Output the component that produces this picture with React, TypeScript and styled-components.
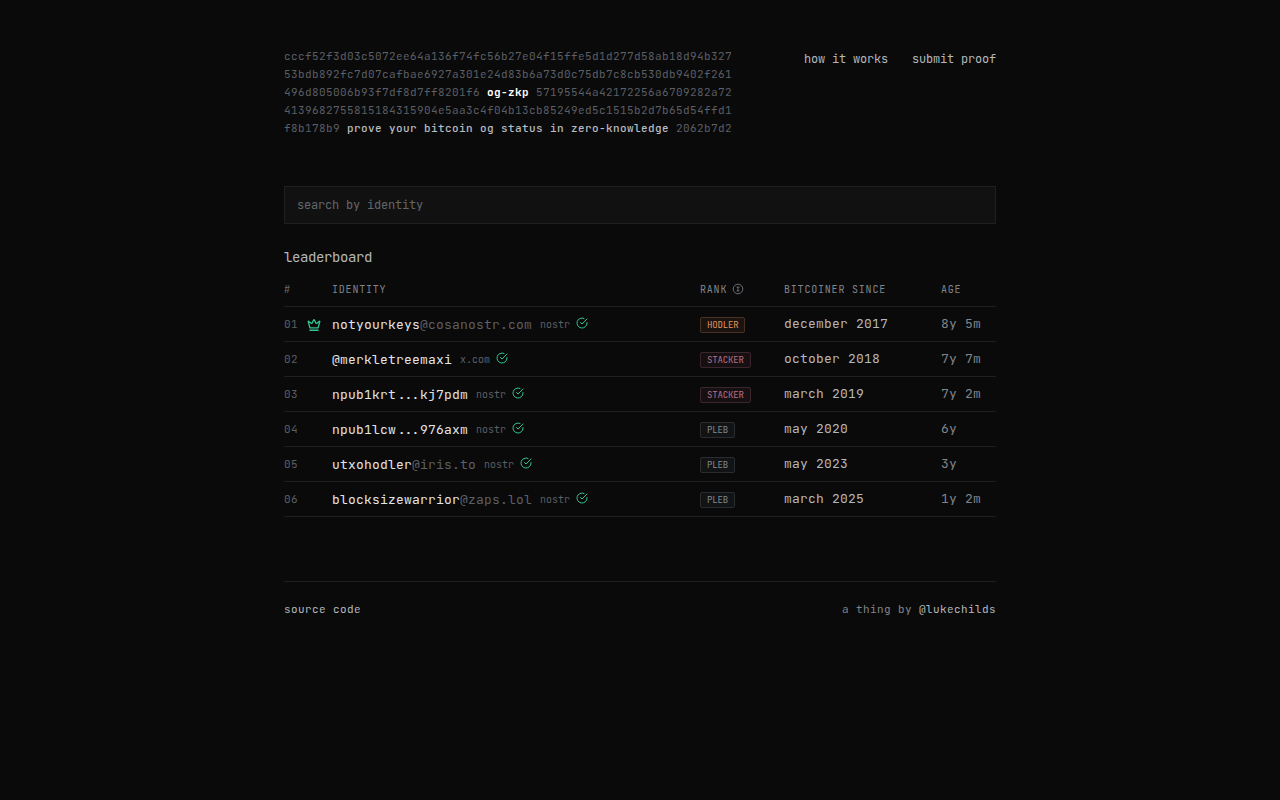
import React from "react";
import styled, { createGlobalStyle } from "styled-components";

const GlobalStyle = createGlobalStyle`
  * { box-sizing: border-box; }
  body {
    margin: 0;
    min-height: 100vh;
    background: #0a0a0a;
    color: #b4b8be;
    font-family: "JetBrains Mono", "DejaVu Sans Mono", "Liberation Mono", monospace;
    font-size: 13px;
    line-height: 18px;
    letter-spacing: 0.2px;
  }
  a { color: inherit; text-decoration: none; }
`;

const Page = styled.main`
  width: 760px;
  margin: 0 auto;
  padding: 47px 24px 0;
`;

const Header = styled.header`
  display: flex;
  justify-content: space-between;
  align-items: flex-start;
  height: 139px;
`;

const HashBlock = styled.div`
  font-size: 11px;
  line-height: 18px;
  letter-spacing: 0.4px;
  color: #5b5f66;
  white-space: pre;
`;

const Brand = styled.strong`
  color: #ffffff;
  font-weight: 700;
`;

const Tagline = styled.span`
  color: #b8bcc2;
  font-weight: 500;
`;

const Nav = styled.nav`
  display: flex;
  gap: 24px;
  padding-top: 3px;
  font-size: 12px;
  line-height: 18px;
  letter-spacing: -0.2px;
`;

const Search = styled.input`
  display: block;
  width: 100%;
  height: 38px;
  padding: 0 12px;
  border: 1px solid #1f1f1f;
  border-radius: 0;
  outline: none;
  background: #111111;
  color: #b4b8be;
  font-family: inherit;
  font-size: 12px;
  letter-spacing: -0.2px;
  &::placeholder { color: #62666c; opacity: 1; }
`;

const Title = styled.h2`
  margin: 23px 0 0;
  font-size: 14px;
  font-weight: 400;
  line-height: 20px;
  letter-spacing: -0.4px;
  color: #b4b8be;
`;

const Row = styled.div<{ $head?: boolean }>`
  display: grid;
  grid-template-columns: 48px 368px 84px 157px 1fr;
  align-items: center;
  height: ${(p) => (p.$head ? 40 : 35)}px;
  border-bottom: 1px solid #1f1f1f;
  white-space: nowrap;
`;

const HeadCell = styled.div<{ $dim?: boolean }>`
  display: flex;
  align-items: center;
  gap: 5px;
  padding-top: 6px;
  font-size: 10px;
  letter-spacing: 0.8px;
  color: ${(p) => (p.$dim ? "#65696f" : "#80848a")};
`;

const Place = styled.div`
  display: flex;
  align-items: center;
  gap: 9px;
  font-size: 11px;
  letter-spacing: 0.4px;
  color: #5b5f66;
`;

const Identity = styled.div`
  display: flex;
  align-items: center;
  padding-top: 1px;
`;

const Name = styled.span`
  color: #e2e5e9;
`;

const Domain = styled.span`
  color: #5b5f66;
`;

const Dots = styled.span`
  display: inline-block;
  width: 24px;
  text-align: center;
  letter-spacing: -1px;
`;

const Platform = styled.span`
  margin: 0 6px 0 8px;
  font-size: 10px;
  letter-spacing: 0;
  color: #5b5f66;
`;

const CheckIcon = styled.svg`
  display: block;
  margin-top: -4px;
`;

const CrownIcon = styled.svg`
  display: block;
  margin-top: 1px;
`;

const InfoIcon = styled.svg`
  display: block;
  margin-top: -1px;
`;

const tones = {
  HODLER: { text: "#e8935c", line: "#463124", fill: "#1a1310" },
  STACKER: { text: "#b8718a", line: "#3b262d", fill: "#171012" },
  PLEB: { text: "#868a90", line: "#2a2d30", fill: "#111315" },
};
type Rank = keyof typeof tones;

const Badge = styled.span<{ $rank: Rank }>`
  display: inline-block;
  height: 16px;
  padding: 0 6px;
  margin-top: 2px;
  border: 1px solid ${(p) => tones[p.$rank].line};
  border-radius: 2px;
  background: ${(p) => tones[p.$rank].fill};
  color: ${(p) => tones[p.$rank].text};
  font-size: 9px;
  line-height: 14px;
  letter-spacing: -0.16px;
  vertical-align: top;
`;

const Since = styled.div`
  color: #b4b8be;
`;

const Age = styled.div`
  color: #80848a;
`;

const Footer = styled.footer`
  display: flex;
  justify-content: space-between;
  margin-top: 64px;
  padding-top: 18px;
  border-top: 1px solid #1f1f1f;
  font-size: 11px;
  line-height: 18px;
  letter-spacing: 0.4px;
`;

const Credit = styled.span`
  color: #80848a;
  a { color: #b4b8be; }
`;

const Check = () => (
  <CheckIcon width="12" height="12" viewBox="0 0 24 24" fill="none" stroke="#34c490" strokeWidth="2" strokeLinecap="round" strokeLinejoin="round">
    <path d="M22 11.08V12a10 10 0 1 1-5.93-9.14" />
    <path d="m9 11 3 3L22 4" />
  </CheckIcon>
);

const Crown = () => (
  <CrownIcon width="14" height="14" viewBox="0 0 24 24" fill="none" stroke="#34c490" strokeWidth="2.2" strokeLinecap="round" strokeLinejoin="round">
    <path d="M11.562 3.266a.5.5 0 0 1 .876 0L15.39 8.87a1 1 0 0 0 1.516.294L21.183 5.5a.5.5 0 0 1 .798.519l-2.834 10.246a1 1 0 0 1-.956.734H5.81a1 1 0 0 1-.957-.734L2.02 6.02a.5.5 0 0 1 .798-.519l4.276 3.664a1 1 0 0 0 1.516-.294z" />
    <path d="M5 21h14" />
  </CrownIcon>
);

const Info = () => (
  <InfoIcon width="12" height="12" viewBox="0 0 12 12" fill="none" stroke="#80848a" strokeWidth="0.8">
    <circle cx="6" cy="6" r="4.8" />
    <path d="M4.5 4.1h3M6 4.1v3.8M4.5 7.9h3" />
  </InfoIcon>
);

type Entry = { name: React.ReactNode; domain?: string; platform: string; rank: Rank; since: string; age: string };

const entries: Entry[] = [
  { name: "notyourkeys", domain: "@cosanostr.com", platform: "nostr", rank: "HODLER", since: "december 2017", age: "8y 5m" },
  { name: "@merkletreemaxi", platform: "x.com", rank: "STACKER", since: "october 2018", age: "7y 7m" },
  { name: <>npub1krt<Dots>...</Dots>kj7pdm</>, platform: "nostr", rank: "STACKER", since: "march 2019", age: "7y 2m" },
  { name: <>npub1lcw<Dots>...</Dots>976axm</>, platform: "nostr", rank: "PLEB", since: "may 2020", age: "6y" },
  { name: "utxohodler", domain: "@iris.to", platform: "nostr", rank: "PLEB", since: "may 2023", age: "3y" },
  { name: "blocksizewarrior", domain: "@zaps.lol", platform: "nostr", rank: "PLEB", since: "march 2025", age: "1y 2m" },
];

export default function App() {
  return (
    <>
      <GlobalStyle />
      <Page>
        <Header>
          <HashBlock>
            <div>cccf52f3d03c5072ee64a136f74fc56b27e04f15ffe5d1d277d58ab18d94b327</div>
            <div>53bdb892fc7d07cafbae6927a301e24d83b6a73d0c75db7c8cb530db9402f261</div>
            <div>496d805006b93f7df8d7ff8201f6 <Brand>og-zkp</Brand> 57195544a42172256a6709282a72</div>
            <div>4139682755815184315904e5aa3c4f04b13cb85249ed5c1515b2d7b65d54ffd1</div>
            <div>f8b178b9 <Tagline>prove your bitcoin og status in zero-knowledge</Tagline> 2062b7d2</div>
          </HashBlock>
          <Nav>
            <a href="#how">how it works</a>
            <a href="#submit">submit proof</a>
          </Nav>
        </Header>
        <Search placeholder="search by identity" />
        <Title>leaderboard</Title>
        <Row $head>
          <HeadCell $dim>#</HeadCell>
          <HeadCell>IDENTITY</HeadCell>
          <HeadCell>RANK <Info /></HeadCell>
          <HeadCell>BITCOINER SINCE</HeadCell>
          <HeadCell>AGE</HeadCell>
        </Row>
        {entries.map((e, i) => (
          <Row key={i}>
            <Place>0{i + 1}{i === 0 && <Crown />}</Place>
            <Identity>
              <Name>{e.name}</Name>
              {e.domain && <Domain>{e.domain}</Domain>}
              <Platform>{e.platform}</Platform>
              <Check />
            </Identity>
            <div><Badge $rank={e.rank}>{e.rank}</Badge></div>
            <Since>{e.since}</Since>
            <Age>{e.age}</Age>
          </Row>
        ))}
        <Footer>
          <a href="#source">source code</a>
          <Credit>a thing by <a href="#author">@lukechilds</a></Credit>
        </Footer>
      </Page>
    </>
  );
}
